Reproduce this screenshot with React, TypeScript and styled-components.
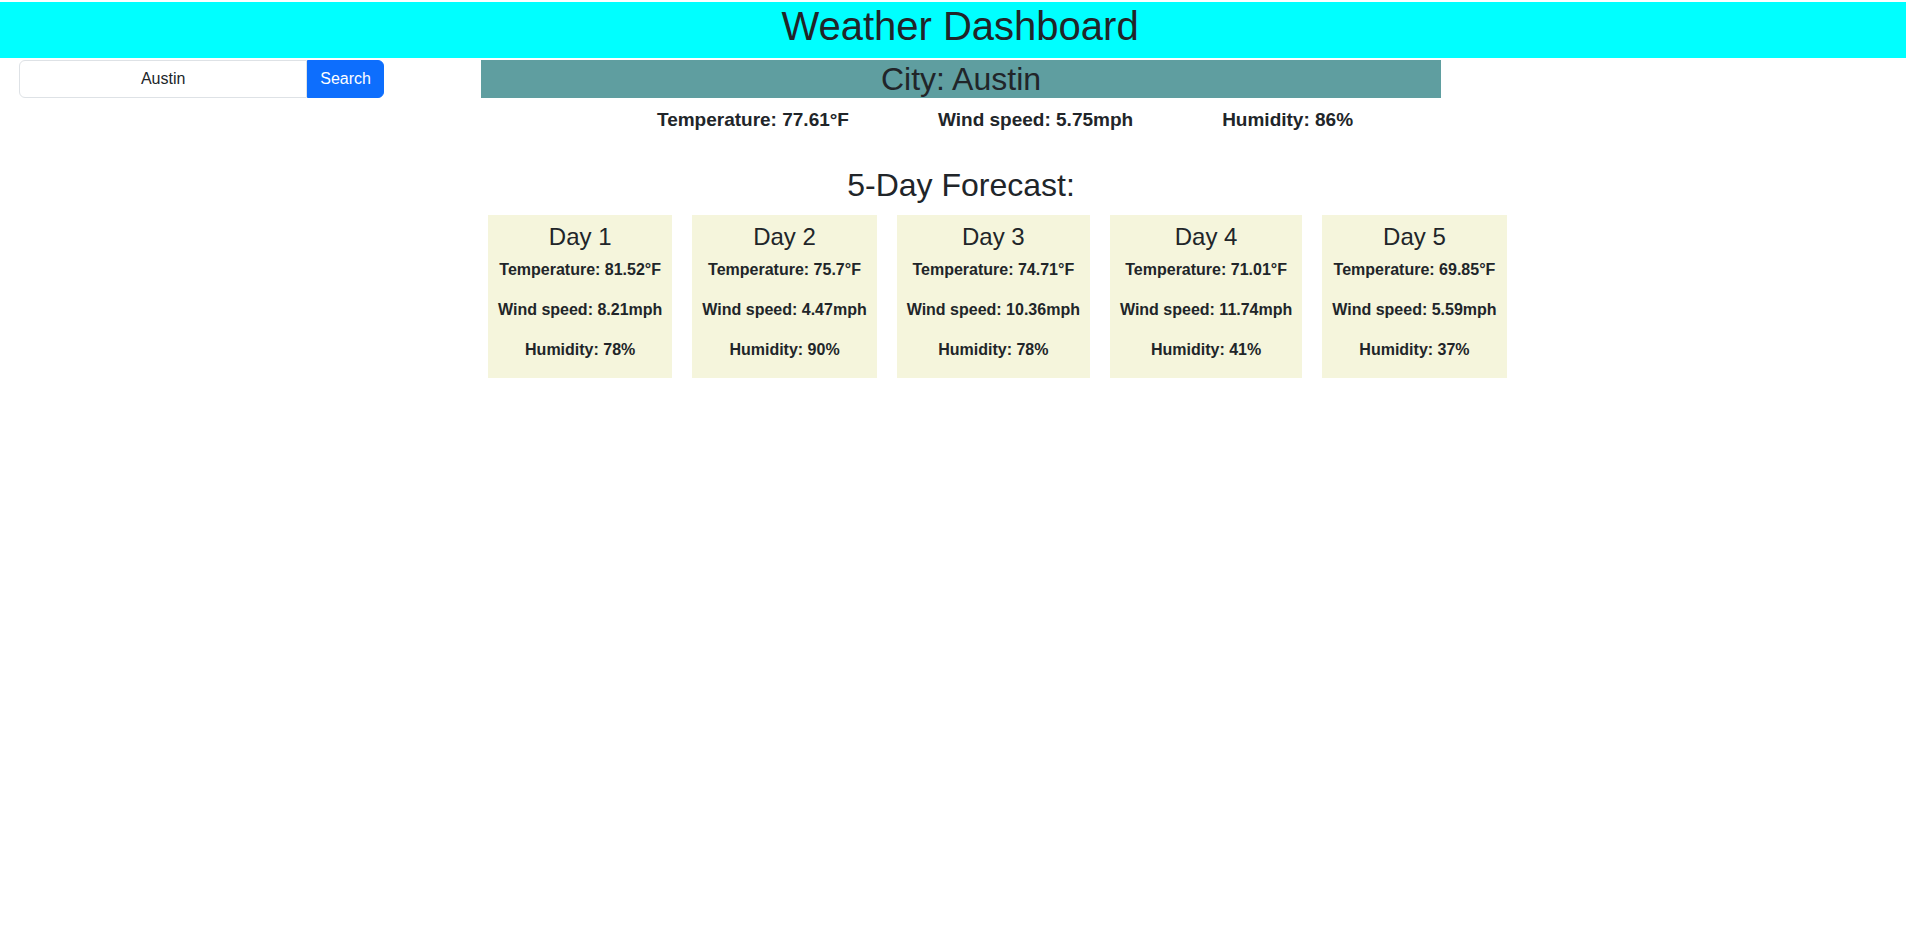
import React from "react";
import styled, { createGlobalStyle } from "styled-components";

const GlobalStyle = createGlobalStyle`
  html, body {
    margin: 0;
    padding: 0;
    background: #ffffff;
  }
  body {
    font-family: "Liberation Sans", Arial, Helvetica, sans-serif;
    color: #212529;
    font-size: 16px;
    line-height: 1.5;
  }
  * { box-sizing: border-box; }
`;

const Header = styled.header`
  margin-top: 2px;
  background: #00ffff;
  text-align: center;
  padding-left: 14px;
`;

const Title = styled.h1`
  margin: 0;
  padding-bottom: 8px;
  font-size: 40px;
  font-weight: 400;
  line-height: 1.2;
  color: #212529;
`;

const Main = styled.main`
  display: grid;
  grid-template-columns: 481px 960px;
  align-items: start;
  margin-top: 2px;
`;

const SearchForm = styled.form`
  display: flex;
  margin-left: 19px;
  width: 365px;
`;

const SearchInput = styled.input`
  flex: 1;
  min-width: 0;
  height: 38px;
  padding: 6px 12px;
  font-family: inherit;
  font-size: 16px;
  line-height: 1.5;
  color: #212529;
  text-align: center;
  border: 1px solid #dee2e6;
  border-radius: 6px 0 0 6px;
  background: #fff;
  outline: none;
`;

const SearchButton = styled.button`
  height: 38px;
  padding: 6px 12px;
  font-family: inherit;
  font-size: 16px;
  line-height: 1.5;
  color: #fff;
  background: #0d6efd;
  border: 1px solid #0d6efd;
  border-radius: 0 6px 6px 0;
  cursor: pointer;
`;

const Column = styled.section`
  display: flex;
  flex-direction: column;
  width: 960px;
`;

const CityBar = styled.h2`
  margin: 0;
  background: #5f9ea0;
  font-size: 32px;
  font-weight: 400;
  line-height: 1.2;
  text-align: center;
  color: #212529;
`;

const StatsRow = styled.div`
  display: flex;
  justify-content: center;
  gap: 89px;
  margin-top: 11px;
  padding-left: 88px;
`;

const Stat = styled.span`
  font-size: 19px;
  font-weight: 700;
  line-height: 1.2;
  white-space: nowrap;
`;

const SectionTitle = styled.h2`
  margin: 34px 0 0;
  font-size: 32px;
  font-weight: 400;
  line-height: 1.2;
  text-align: center;
`;

const Cards = styled.div`
  display: flex;
  gap: 20px;
  margin-top: 10px;
  margin-left: 7px;
`;

const Card = styled.div`
  flex: none;
  background: #f5f5dc;
  padding: 8px 10px 0;
  text-align: center;
`;

const DayTitle = styled.h4`
  margin: 0 0 7px;
  font-size: 24px;
  font-weight: 400;
  line-height: 1.2;
`;

const Line = styled.p`
  margin: 0 0 16px;
  font-size: 16px;
  font-weight: 700;
  line-height: 24px;
  white-space: nowrap;
`;

const forecast = [
  { day: "Day 1", temp: "81.52", wind: "8.21", hum: "78" },
  { day: "Day 2", temp: "75.7", wind: "4.47", hum: "90" },
  { day: "Day 3", temp: "74.71", wind: "10.36", hum: "78" },
  { day: "Day 4", temp: "71.01", wind: "11.74", hum: "41" },
  { day: "Day 5", temp: "69.85", wind: "5.59", hum: "37" },
];

export default function App() {
  return (
    <>
      <GlobalStyle />
      <Header>
        <Title>Weather Dashboard</Title>
      </Header>
      <Main>
        <SearchForm onSubmit={(e) => e.preventDefault()}>
          <SearchInput defaultValue="Austin" />
          <SearchButton type="submit">Search</SearchButton>
        </SearchForm>
        <Column>
          <CityBar>City: Austin</CityBar>
          <StatsRow>
            <Stat>Temperature: 77.61°F</Stat>
            <Stat>Wind speed: 5.75mph</Stat>
            <Stat>Humidity: 86%</Stat>
          </StatsRow>
          <SectionTitle>5-Day Forecast:</SectionTitle>
          <Cards>
            {forecast.map((f) => (
              <Card key={f.day}>
                <DayTitle>{f.day}</DayTitle>
                <Line>Temperature: {f.temp}°F</Line>
                <Line>Wind speed: {f.wind}mph</Line>
                <Line>Humidity: {f.hum}%</Line>
              </Card>
            ))}
          </Cards>
        </Column>
      </Main>
    </>
  );
}
